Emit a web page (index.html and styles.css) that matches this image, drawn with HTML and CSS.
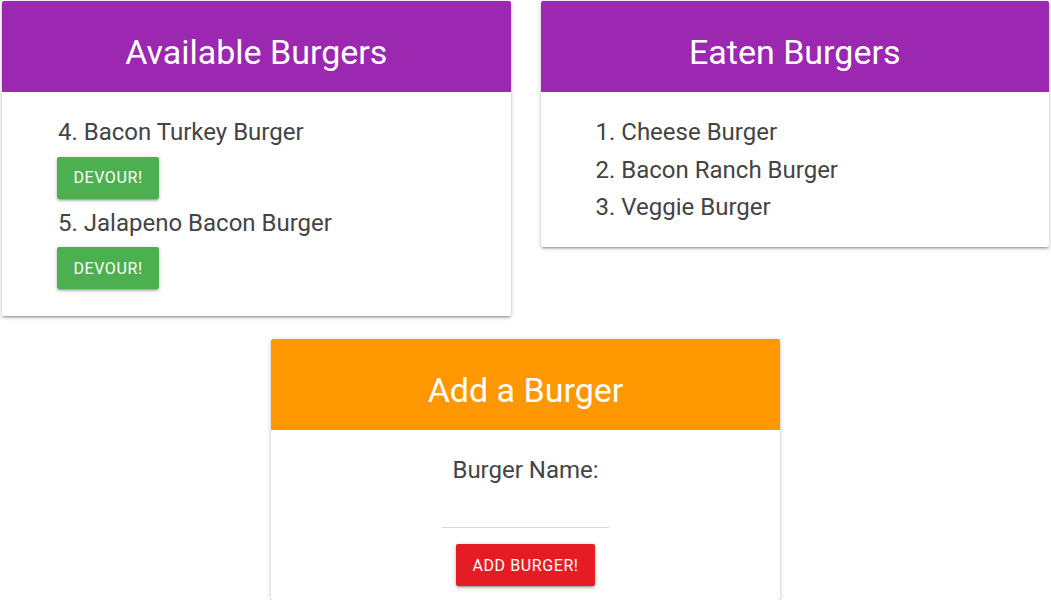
FILE: index.html
```html
<!DOCTYPE html>
<html>
<head>
<meta charset="utf-8">
<link rel="stylesheet" href="styles.css">
</head>
<body>
<div class="page">
  <div class="row">
    <div class="card">
      <div class="card-head purple"><h2>Available Burgers</h2></div>
      <ul class="list">
        <li><div class="name">4. Bacon Turkey Burger</div><button class="btn green">Devour!</button></li>
        <li><div class="name">5. Jalapeno Bacon Burger</div><button class="btn green">Devour!</button></li>
      </ul>
    </div>
    <div class="card">
      <div class="card-head purple"><h2>Eaten Burgers</h2></div>
      <ul class="list eaten">
        <li><div class="name">1. Cheese Burger</div></li>
        <li><div class="name">2. Bacon Ranch Burger</div></li>
        <li><div class="name">3. Veggie Burger</div></li>
      </ul>
    </div>
  </div>
  <div class="row center">
    <div class="card">
      <div class="card-head orange"><h2>Add a Burger</h2></div>
      <form class="form">
        <label class="label">Burger Name:</label>
        <input class="input" type="text">
        <button type="button" class="btn red">Add Burger!</button>
      </form>
    </div>
  </div>
</div>
</body>
</html>
```
FILE: styles.css
```css
* { box-sizing: border-box; }
body {
  margin: 0;
  background: #fff;
  font-family: Roboto, "Noto Sans", Arial, sans-serif;
  color: #444;
}
.page {
  padding: 1px 2px 0 2px;
}
.row {
  display: flex;
  gap: 30px;
  align-items: flex-start;
}
.row.center {
  justify-content: center;
  margin-top: 23px;
}
.card {
  width: 509px;
  background: #fff;
  border-radius: 2px;
  box-shadow: 0 2px 2px 0 rgba(0,0,0,.14), 0 3px 1px -2px rgba(0,0,0,.12), 0 1px 5px 0 rgba(0,0,0,.2);
  overflow: hidden;
}
.card-head {
  height: 91px;
  display: flex;
  align-items: center;
  justify-content: center;
}
.card-head h2 {
  margin: 0;
  color: #fff;
  font-weight: 400;
  font-size: 34px;
  line-height: 1;
  padding-top: 10px;
}
.purple { background: #9c27b0; }
.orange { background: #ff9800; }
.list {
  list-style: none;
  margin: 0;
  padding: 22px 20px 21px 56px;
}
.list.eaten {
  padding: 22px 20px 20px 55px;
}
.name {
  font-size: 24px;
  line-height: 37.5px;
}
.btn {
  display: block;
  border: none;
  border-radius: 2px;
  color: #fff;
  font-family: Roboto, "Noto Sans", Arial, sans-serif;
  font-size: 16px;
  text-transform: uppercase;
  height: 42px;
  padding: 0;
  box-shadow: 0 2px 2px 0 rgba(0,0,0,.14), 0 3px 1px -2px rgba(0,0,0,.12), 0 1px 5px 0 rgba(0,0,0,.2);
  letter-spacing: 0.6px;
}
.list .btn {
  margin: 5px 0 6px -1px;
  width: 102px;
}
.green { background: #4caf50; }
.red { background: #e61c24; }
.form {
  display: flex;
  flex-direction: column;
  align-items: center;
  padding: 22px 0 14px;
}
.label {
  font-size: 24px;
  line-height: 37px;
}
.input {
  margin-top: 2px;
  width: 167px;
  height: 37px;
  border: none;
  border-bottom: 1px solid #d8d8d8;
  outline: none;
  background: transparent;
}
.form .btn {
  margin-top: 16px;
  width: 139px;
}
```
